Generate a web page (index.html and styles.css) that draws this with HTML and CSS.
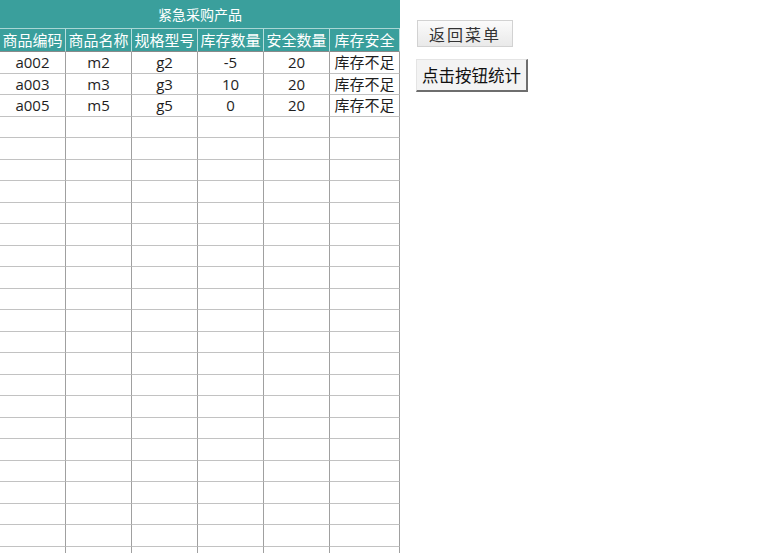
FILE: index.html
```html
<!DOCTYPE html>
<html lang="zh">
<head>
<meta charset="utf-8">
<link rel="stylesheet" href="styles.css">
</head>
<body>
<div class="page">
  <div class="sheet">
    <div class="title">紧急采购产品</div>
    <div class="grid head">
      <div class="c">商品编码</div><div class="c">商品名称</div><div class="c">规格型号</div><div class="c">库存数量</div><div class="c">安全数量</div><div class="c">库存安全</div>
    </div>
    <div class="grid body-rows">
      <div class="c">a002</div><div class="c">m2</div><div class="c">g2</div><div class="c">-5</div><div class="c">20</div><div class="c">库存不足</div>
      <div class="c">a003</div><div class="c">m3</div><div class="c">g3</div><div class="c">10</div><div class="c">20</div><div class="c">库存不足</div>
      <div class="c">a005</div><div class="c">m5</div><div class="c">g5</div><div class="c">0</div><div class="c">20</div><div class="c">库存不足</div>
    </div>
  </div>
  <div class="side">
    <button class="btn back">返回菜单</button>
    <button class="btn stat">点击按钮统计</button>
  </div>
</div>
<script>
  var g = document.querySelector('.body-rows');
  for (var i = 0; i < 21 * 6; i++) {
    var d = document.createElement('div');
    d.className = 'c';
    g.appendChild(d);
  }
</script>
</body>
</html>
```
FILE: styles.css
```css
html, body {
  margin: 0;
  padding: 0;
  background: #fff;
}
.page {
  display: flex;
  align-items: flex-start;
  height: 553px;
  overflow: hidden;
  font-family: "Open Sans", "Noto Sans CJK SC", sans-serif;
  color: #222;
}
.sheet {
  width: 400px;
  flex: none;
}
.title {
  background: #3a9f9c;
  color: #fff;
  height: 28px;
  line-height: 29px;
  text-align: center;
  font-family: "Noto Sans CJK SC", sans-serif;
  font-size: 14px;
  border-bottom: 1px solid #a9d6d4;
}
.grid {
  display: grid;
  grid-template-columns: 66px 66px 66px 66px 66px 70px;
}
.c {
  box-sizing: border-box;
  text-align: center;
  font-size: 15px;
  white-space: nowrap;
}
.head .c {
  background: #3a9f9c;
  color: #fff;
  height: 23px;
  line-height: 22px;
  border-right: 1px solid #b6dedd;
  border-bottom: 1px solid #8a8a8a;
  font-family: "Noto Sans CJK SC", sans-serif;
  overflow: hidden;
}
.body-rows .c {
  height: 21.5px;
  line-height: 21px;
  border-right: 1px solid #a0a0a0;
  border-bottom: 1px solid #c2c2c2;
  color: #1e1e1e;
}
.side {
  display: flex;
  flex-direction: column;
  align-items: flex-start;
  gap: 12px;
  padding-left: 16px;
  padding-top: 20px;
}
.btn {
  font-family: "Noto Sans CJK SC", sans-serif;
  margin: 0;
  cursor: default;
}
.back {
  width: 96px;
  height: 27px;
  margin-left: 1px;
  padding: 0;
  font-size: 16px;
  letter-spacing: 2px;
  color: #333;
  border: 1px solid #d2d2d2;
  background: linear-gradient(#fbfbfb, #e9e9e9);
}
.stat {
  width: 112px;
  height: 33px;
  padding: 0;
  font-size: 16.5px;
  color: #111;
  background: #f3f3f3;
  border-style: solid;
  border-width: 1px 2px 2px 1px;
  border-color: #e4e4e4 #6e6e6e #6e6e6e #e4e4e4;
}
```
